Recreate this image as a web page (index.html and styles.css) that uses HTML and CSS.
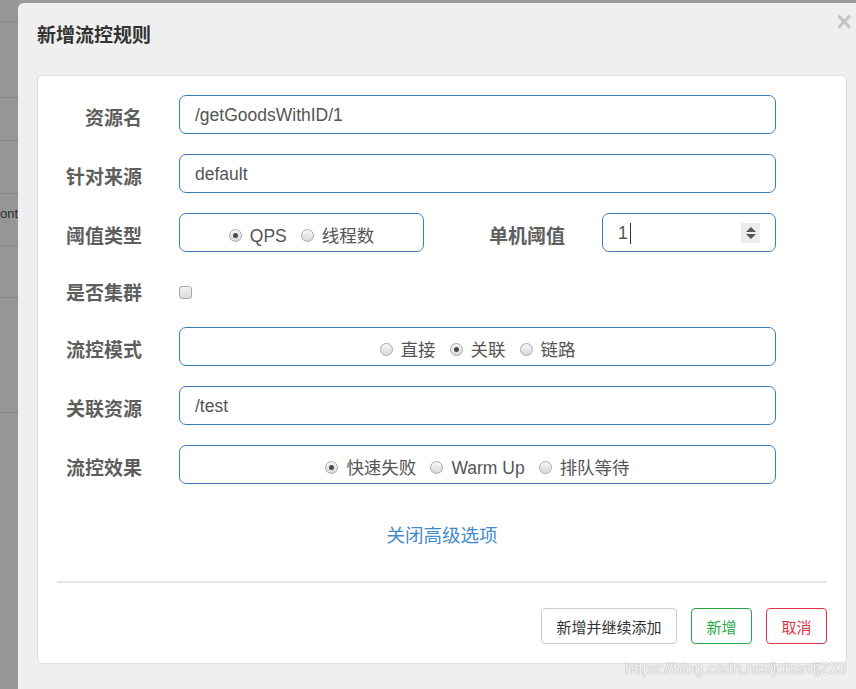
FILE: index.html
```html
<!DOCTYPE html>
<html lang="zh">
<head>
<meta charset="utf-8">
<title>新增流控规则</title>
<link rel="stylesheet" href="styles.css">
</head>
<body>
<div class="screen">
  <div class="backdrop">
    <div class="bd-row h18"></div>
    <div class="bd-row h76"></div>
    <div class="bd-row h43"></div>
    <div class="bd-row h53"></div>
    <div class="bd-row h52 bd-text"><span>ont</span></div>
    <div class="bd-row h52"></div>
    <div class="bd-row h115"></div>
  </div>
  <div class="dialog">
    <div class="dialog-header">
      <h4 class="dialog-title">新增流控规则</h4>
      <span class="close">×</span>
    </div>
    <div class="panel">
      <div class="form">
        <div class="row">
          <label class="label">资源名</label>
          <div class="field input">/getGoodsWithID/1</div>
        </div>
        <div class="row">
          <label class="label">针对来源</label>
          <div class="field input">default</div>
        </div>
        <div class="row">
          <label class="label">阈值类型</label>
          <div class="field radios short">
            <span class="radio checked"></span><span class="rtext">QPS</span>
            <span class="radio"></span><span class="rtext">线程数</span>
          </div>
          <label class="label label2">单机阈值</label>
          <div class="field input num">
            <span class="numval">1</span><span class="caret"></span>
            <span class="spin"><i class="up"></i><i class="down"></i></span>
          </div>
        </div>
        <div class="row row-check">
          <label class="label">是否集群</label>
          <span class="checkbox"></span>
        </div>
        <div class="row">
          <label class="label">流控模式</label>
          <div class="field radios">
            <span class="radio"></span><span class="rtext">直接</span>
            <span class="radio checked"></span><span class="rtext">关联</span>
            <span class="radio"></span><span class="rtext">链路</span>
          </div>
        </div>
        <div class="row">
          <label class="label">关联资源</label>
          <div class="field input">/test</div>
        </div>
        <div class="row">
          <label class="label">流控效果</label>
          <div class="field radios">
            <span class="radio checked"></span><span class="rtext">快速失败</span>
            <span class="radio"></span><span class="rtext">Warm Up</span>
            <span class="radio"></span><span class="rtext">排队等待</span>
          </div>
        </div>
      </div>
      <div class="advanced"><a class="link">关闭高级选项</a></div>
      <div class="sep"></div>
      <div class="actions">
        <button class="btn btn-default">新增并继续添加</button>
        <button class="btn btn-ok">新增</button>
        <button class="btn btn-cancel">取消</button>
      </div>
    </div>
    <div class="watermark">https://blog.csdn.net/jokerdj233</div>
  </div>
</div>
</body>
</html>
```

FILE: styles.css
```css
* { box-sizing: border-box; }
html, body { margin: 0; padding: 0; }
body {
  width: 856px;
  height: 689px;
  overflow: hidden;
  background: #969696;
  font-family: "Liberation Sans", "Noto Sans CJK SC", sans-serif;
}
.screen {
  display: flex;
  height: 689px;
  padding-top: 3px;
  background: #9a9a9a;
}
.backdrop {
  width: 18px;
  flex: none;
  margin-top: -3px;
  background: #969696;
  display: flex;
  flex-direction: column;
}
.bd-row { border-bottom: 1px solid #848484; flex: none; }
.h18 { height: 22px; }
.h76 { height: 76px; }
.h43 { height: 43px; }
.h53 { height: 53px; }
.h52 { height: 52px; }
.h115 { height: 115px; }
.bd-text {
  display: flex;
  justify-content: flex-end;
  white-space: nowrap;
  font-size: 13px;
  color: #2b2b2b;
  padding-top: 12px;
}
.dialog {
  position: relative;
  flex: 1;
  background: #efefef;
  border-radius: 6px 0 0 0;
  display: flex;
  flex-direction: column;
}
.dialog-header {
  height: 72px;
  display: flex;
  justify-content: space-between;
  align-items: flex-start;
  padding: 0 4px 0 19px;
}
.dialog-title {
  margin: 20px 0 0;
  font-size: 19px;
  line-height: 26px;
  font-weight: bold;
  color: #333;
}
.close {
  margin-top: 6px;
  font-size: 27px;
  line-height: 26px;
  font-weight: bold;
  color: #c4c4c4;
}
.panel {
  margin-left: 19px;
  width: 810px;
  height: 589px;
  background: #fff;
  border: 1px solid #dcdcdc;
  border-radius: 5px;
  padding: 19px 19px 0 19px;
  display: flex;
  flex-direction: column;
}
.form {
  display: flex;
  flex-direction: column;
  gap: 20px;
  flex: none;
}
.row {
  display: flex;
  align-items: center;
  height: 39px;
  flex: none;
}
.row-check { height: 35px; }
.label {
  width: 85px;
  flex: none;
  text-align: right;
  font-size: 19px;
  font-weight: bold;
  color: #5e5e5e;
  margin-right: 37px;
  padding-top: 4px;
  font-family: "Noto Sans CJK SC", sans-serif;
}
.label2 { width: 141px; margin-right: 37px; }
.field {
  height: 39px;
  width: 597px;
  border: 1px solid #3d7cb9;
  border-radius: 7px;
  font-size: 17.5px;
  color: #555;
  display: flex;
  align-items: center;
}
.input { padding-left: 15px; padding-top: 1px; }
.short { width: 245px; }
.num { width: 174px; position: relative; }
.numval { color: #555; }
.caret {
  width: 1px;
  height: 21px;
  background: #333;
  margin-left: 2px;
}
.spin {
  margin-left: auto;
  margin-right: 15px;
  width: 19px;
  height: 20px;
  background: #ececec;
  display: flex;
  flex-direction: column;
  align-items: center;
  justify-content: center;
  gap: 2px;
}
.spin i { display: block; width: 0; height: 0; border-left: 5px solid transparent; border-right: 5px solid transparent; }
.spin .up { border-bottom: 5px solid #555; }
.spin .down { border-top: 5px solid #555; }
.radios { justify-content: center; padding-top: 5px; }
.radio {
  width: 13px;
  height: 13px;
  border-radius: 50%;
  border: 1px solid #a9a9a9;
  background: linear-gradient(#f6f6f6, #d9d9d9);
  display: inline-flex;
  align-items: center;
  justify-content: center;
  margin-left: 14px;
  margin-right: 8px;
  flex: none;
}
.radio:first-child { margin-left: 0; }
.radio.checked::after {
  content: "";
  width: 5px;
  height: 5px;
  border-radius: 50%;
  background: #4a4a4a;
}
.rtext { line-height: 20px; padding-top: 2px; }
.checkbox {
  width: 13px;
  height: 13px;
  border: 1px solid #a9a9a9;
  border-radius: 3px;
  background: linear-gradient(#f4f4f4, #dadada);
  margin-top: 5px;
}
.advanced {
  margin-top: 39px;
  height: 22px;
  text-align: center;
}
.link {
  font-size: 18.5px;
  line-height: 22px;
  color: #3f8acb;
  font-family: "Noto Sans CJK SC", sans-serif;
}
.sep {
  margin-top: 36px;
  height: 2px;
  background: #e4e4e4;
}
.actions {
  margin-top: 25px;
  display: flex;
  justify-content: flex-end;
  gap: 14px;
}
.btn {
  height: 36px;
  border-radius: 4px;
  background: #fff;
  font-size: 15px;
  font-family: "Noto Sans CJK SC", sans-serif;
  padding: 0;
  display: flex;
  align-items: center;
  justify-content: center;
}
.btn-default { width: 136px; border: 1px solid #cccccc; color: #333; }
.btn-ok { width: 61px; border: 1px solid #2aa744; color: #2aa744; }
.btn-cancel { width: 61px; border: 1px solid #dc3545; color: #dc3545; }
.watermark {
  position: absolute;
  left: 607px;
  top: 657px;
  font-size: 16px;
  color: rgba(255,255,255,0.9);
  text-shadow: 0 0 1px #aaa, 0 0 1px #aaa;
  white-space: nowrap;
}
```
